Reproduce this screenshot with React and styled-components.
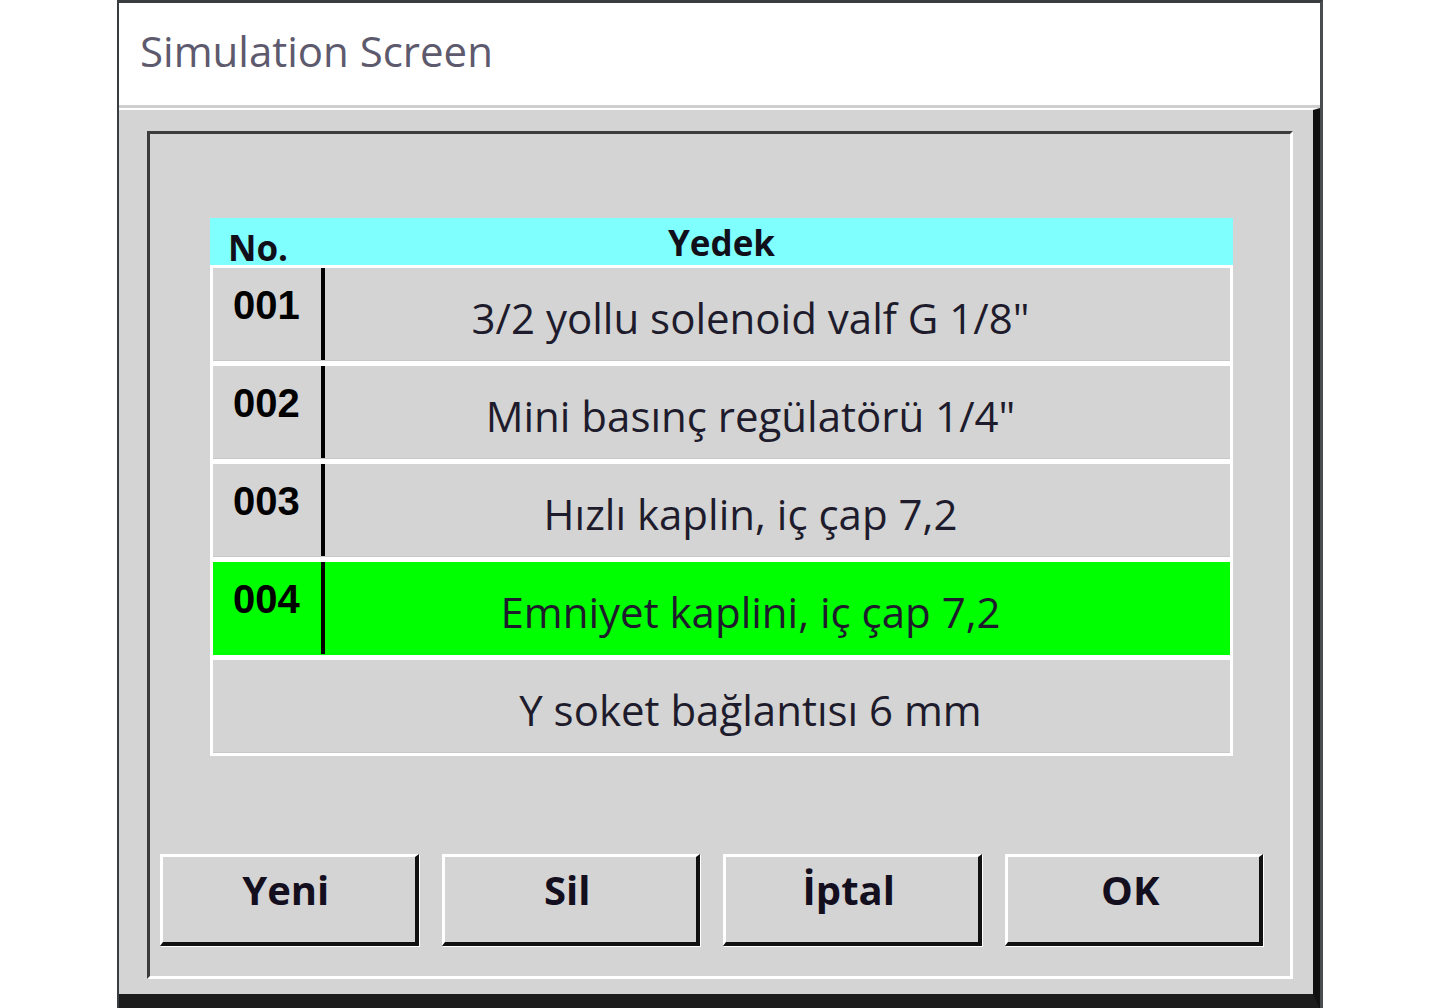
import React from 'react'
import styled, { createGlobalStyle } from 'styled-components'

const GlobalStyle = createGlobalStyle`
    html, body {
        margin: 0;
        padding: 0;
        background: #fff;
        overflow: hidden;
    }
    * {
        box-sizing: border-box;
    }
`

const Window = styled.div`
    margin-left: 117px;
    width: 1206px;
    border-top: 3px solid #3a3d40;
    border-left: 2px solid #3a3d40;
    border-right: 3px solid #4a4d50;
    background: #fff;
`

const TitleBar = styled.div`
    height: 105px;
    padding: 0 0 8px 21px;
    display: flex;
    align-items: center;
    background: #fff;
    border-bottom: 3px solid #cfcfcf;
`

const Title = styled.span`
    font-family: 'Open Sans', 'Noto Sans', sans-serif;
    font-size: 42px;
    color: #5e5a6e;
`

const Body = styled.div`
    background: #d4d4d4;
    border-top: 2px solid #fff;
    border-right: 7px solid #111;
    border-bottom: 15px solid #1c1c1c;
    padding: 21px 20px 15px 28px;
`

const Panel = styled.div`
    display: flex;
    flex-direction: column;
    border-top: 3px solid #3c3c3c;
    border-left: 3px solid #3c3c3c;
    border-right: 3px solid #fff;
    border-bottom: 3px solid #fff;
    padding: 84px 0 30px 0;
`

const Table = styled.div`
    margin: 0 57px 0 60px;
    display: flex;
    flex-direction: column;
`

const Header = styled.div`
    height: 47px;
    background: #80ffff;
    display: grid;
    grid-template-columns: 1fr auto 1fr;
    align-items: center;
    font-family: 'Open Sans', 'Noto Sans', sans-serif;
    font-weight: 700;
    font-size: 35px;
    color: #11101a;
`

const HeaderNo = styled.span`
    padding-left: 18px;
    padding-top: 6px;
`

const HeaderTitle = styled.span`
    padding-bottom: 4px;
`

const Rows = styled.div`
    background: #fff;
    padding: 3px;
    display: flex;
    flex-direction: column;
    gap: 5px;
`

const Row = styled.div`
    height: 93px;
    display: grid;
    grid-template-columns: 108px 4px 1fr;
    background: ${p => (p.$active ? '#00ff00' : '#d4d4d4')};
    border-bottom: 1px solid ${p => (p.$active ? '#00ff00' : '#c8c8c8')};
`

const NumCell = styled.div`
    padding: 17px 0 0 20px;
    font-family: 'Liberation Sans', Arial, sans-serif;
    font-weight: 700;
    font-size: 40px;
    line-height: 1;
    color: #000;
`

const Divider = styled.div`
    background: ${p => (p.$hidden ? 'transparent' : '#000')};
`

const TextCell = styled.div`
    display: flex;
    align-items: center;
    justify-content: center;
    padding: 6px 54px 0 0;
    font-family: 'Open Sans', 'Noto Sans', sans-serif;
    font-size: 42px;
    color: #1e1c2c;
    white-space: nowrap;
`

const ButtonBar = styled.div`
    margin-top: 98px;
    padding: 0 27px 0 10px;
    display: flex;
    gap: 23px;
`

const Button = styled.button`
    flex: 1;
    height: 92px;
    padding: 0 6px 20px 0;
    background: #d4d4d4;
    border-style: solid;
    border-width: 3px 4px 4px 3px;
    border-color: #fff #111 #111 #fff;
    box-shadow: 1px 1px 0 #fff;
    font-family: 'Open Sans', 'Noto Sans', sans-serif;
    font-weight: 700;
    font-size: 40px;
    color: #140f1e;
    cursor: pointer;
`

const parts = [
    { no: '001', name: '3/2 yollu solenoid valf G 1/8"' },
    { no: '002', name: 'Mini basınç regülatörü 1/4"' },
    { no: '003', name: 'Hızlı kaplin, iç çap 7,2' },
    { no: '004', name: 'Emniyet kaplini, iç çap 7,2', active: true },
    { no: '', name: 'Y soket bağlantısı 6 mm' },
]

const App = () => {
    return (
        <>
            <GlobalStyle />
            <Window>
                <TitleBar>
                    <Title>Simulation Screen</Title>
                </TitleBar>
                <Body>
                    <Panel>
                        <Table>
                            <Header>
                                <HeaderNo>No.</HeaderNo>
                                <HeaderTitle>Yedek</HeaderTitle>
                                <span />
                            </Header>
                            <Rows>
                                {parts.map((part, i) => (
                                    <Row key={i} $active={part.active}>
                                        <NumCell>{part.no}</NumCell>
                                        <Divider $hidden={!part.no} />
                                        <TextCell>{part.name}</TextCell>
                                    </Row>
                                ))}
                            </Rows>
                        </Table>
                        <ButtonBar>
                            <Button>Yeni</Button>
                            <Button>Sil</Button>
                            <Button>İptal</Button>
                            <Button>OK</Button>
                        </ButtonBar>
                    </Panel>
                </Body>
            </Window>
        </>
    )
}

export default App
